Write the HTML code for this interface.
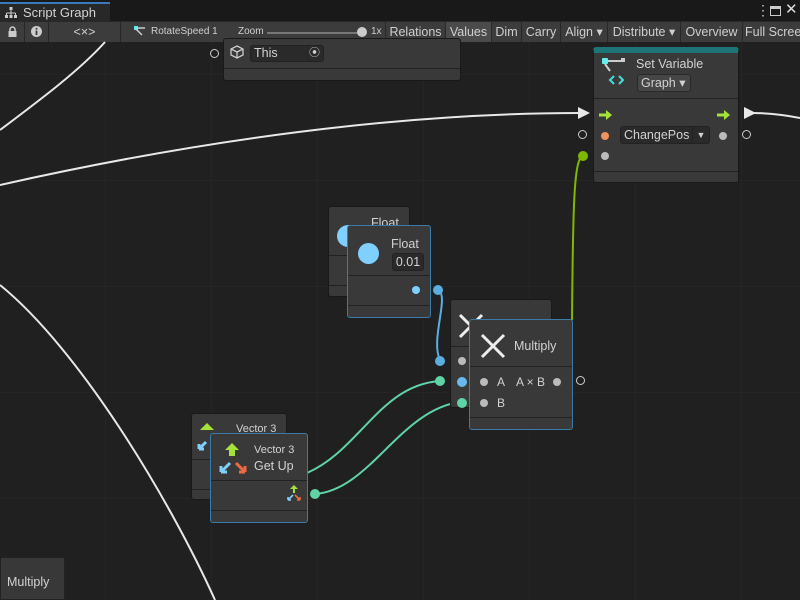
<!DOCTYPE html>
<html><head><meta charset="utf-8"><style>
*{margin:0;padding:0;box-sizing:border-box}
html,body{width:800px;height:600px;overflow:hidden}
body{background:#202020;font-family:"Liberation Sans",sans-serif;color:#d2d2d2;position:relative}
.grid{position:absolute;left:0;top:42px;width:800px;height:558px;background-image:linear-gradient(#252525 1px,transparent 1px),linear-gradient(90deg,#252525 1px,transparent 1px);background-size:106px 106px;background-position:-1px 32px}
.abs{position:absolute}
.node{position:absolute;background:#393939;border:1px solid #191919;border-radius:3px}
.sel{border:1px solid #3a7ca5}
.sep{position:absolute;left:0;right:0;height:1px;background:#222}
.port{position:absolute;width:8px;height:8px;border-radius:50%}
.oport{position:absolute;width:9px;height:9px;border-radius:50%;border:1px solid #ccc}
.tb{position:absolute;top:22px;height:20px;background:#3c3c3c;font-size:12.5px;line-height:20px;color:#cfcfcf;text-align:center}
</style></head><body>
<div class="grid"></div>
<div class="abs" style="left:0;top:0;width:800px;height:21px;background:#191919"></div>
<div class="abs" style="left:0;top:2px;width:110px;height:20px;background:#282828;border-top:2px solid #3a79bb;font-size:13px;line-height:18px;padding-left:23px">Script Graph</div>
<svg class="abs" style="left:5px;top:7px" width="12" height="11"><rect x="4.5" y="0" width="3" height="3" fill="#ccc"/><path d="M6 3v3M1.5 6h9M1.5 6v2M6 6v2M10.5 6v2" stroke="#ccc" fill="none"/><rect x="0" y="8" width="3" height="3" fill="#ccc"/><rect x="4.5" y="8" width="3" height="3" fill="#ccc"/><rect x="9" y="8" width="3" height="3" fill="#ccc"/></svg>
<div class="abs" style="left:756px;top:2px;font-size:14px;color:#ccc">⋮</div>
<div class="abs" style="left:770px;top:6px;width:11px;height:10px;border:1.5px solid #ccc;border-top-width:3px"></div>
<div class="abs" style="left:785px;top:0px;font-size:15px;color:#ddd">✕</div>
<div class="abs" style="left:0;top:21px;width:800px;height:21px;background:#282828"></div>
<div class="tb" style="left:0;width:24px"></div>
<svg class="abs" style="left:8px;top:26px" width="9" height="11"><path d="M2 5V3.5a2.5 2.5 0 0 1 5 0V5" stroke="#ccc" stroke-width="1.5" fill="none"/><rect x="0.5" y="5" width="8" height="6" fill="#ccc"/></svg>
<div class="tb" style="left:25px;width:23px"></div>
<svg class="abs" style="left:31px;top:26px" width="11" height="11"><circle cx="5.5" cy="5.5" r="5.5" fill="#ccc"/><rect x="4.6" y="4.5" width="1.8" height="4.5" fill="#3c3c3c"/><circle cx="5.5" cy="2.8" r="1" fill="#3c3c3c"/></svg>
<div class="tb" style="left:49px;width:71px">&lt;×&gt;</div>
<div class="tb" style="left:121px;width:264px;text-align:left;font-size:10px;padding-left:30px">RotateSpeed 1<span style="position:absolute;left:117px">Zoom</span><span style="position:absolute;left:146px;top:10px;width:95px;height:2px;background:#777"></span><span style="position:absolute;left:236px;top:5px;width:10px;height:10px;border-radius:50%;background:#ccc"></span><span style="position:absolute;left:250px">1x</span></div>
<svg class="abs" style="left:134px;top:26px" width="12" height="11"><rect x="0" y="0" width="4" height="4" fill="#5ee"/><path d="M3 2h8M2 3l6 6" stroke="#ccc" stroke-width="1.5"/></svg>
<div class="tb" style="left:386px;width:59px">Relations</div>
<div class="tb" style="left:446px;width:45px;background:#4b4b4b">Values</div>
<div class="tb" style="left:492px;width:29px">Dim</div>
<div class="tb" style="left:522px;width:38px">Carry</div>
<div class="tb" style="left:561px;width:46px">Align ▾</div>
<div class="tb" style="left:608px;width:72px">Distribute ▾</div>
<div class="tb" style="left:681px;width:61px">Overview</div>
<div class="tb" style="left:743px;width:57px;text-align:left;padding-left:2px;overflow:hidden;white-space:nowrap">Full Screen</div>
<svg class="abs" style="left:0;top:0" width="800" height="600">
<g fill="none" stroke="#e8e8e8" stroke-width="2">
<path d="M0 130 C40 100 80 70 105 42"/>
<path d="M0 185 C200 140 400 113 580 113"/>
<path d="M0 285 C80 350 170 500 215 600"/>
<path d="M752 113 C770 113 785 115 800 118"/>
</g>
<polygon points="578,107 590,113 578,119" fill="#e8e8e8"/>
<polygon points="744,107 756,113 744,119" fill="#e8e8e8"/>
<path d="M583 155 C574 160 573 200 572 320" stroke="#7fb800" stroke-width="2" fill="none"/>
<circle cx="583" cy="156" r="5" fill="#7fb800"/>
<path d="M438 290 C450 295 430 340 440 360" stroke="#5aaee0" stroke-width="2" fill="none"/>
<circle cx="438" cy="290" r="5" fill="#5aaee0"/>
<circle cx="440" cy="361" r="5" fill="#5aaee0"/>
<g stroke="#5fd3a6" stroke-width="2" fill="none">
<path d="M307 473 C360 450 380 385 440 381"/>
<path d="M315 494 C370 490 400 410 460 402"/>
</g>
<circle cx="440" cy="381" r="5" fill="#5fd3a6"/>
<circle cx="315" cy="494" r="5" fill="#5fd3a6"/>
</svg>
<div class="oport" style="left:210px;top:49px"></div>
<div class="node" style="left:223px;top:38px;width:238px;height:43px">
<div class="sep" style="top:29px"></div>
<svg class="abs" style="left:6px;top:6px" width="14" height="14"><path d="M7 1l6 3v6l-6 3-6-3V4zM1 4l6 3 6-3M7 7v6" stroke="#ccc" fill="none" stroke-width="1.3"/></svg>
<div class="abs" style="left:26px;top:6px;width:74px;height:17px;background:#2a2a2a;border:1px solid #222;border-radius:3px;font-size:12.5px;line-height:15px;padding-left:3px">This<span style="position:absolute;right:3px;top:0;font-size:11px">⦿</span></div>
</div>
<div class="node" style="left:593px;top:47px;width:146px;height:136px;border-top:6px solid #1d7577">
<div class="sep" style="top:45px"></div>
<div class="sep" style="top:118px"></div>
<svg class="abs" style="left:6px;top:4px" width="30" height="30"><rect x="2" y="1" width="6" height="6" rx="1" fill="#6ee"/><rect x="21" y="1" width="4" height="4" fill="#ccc"/><path d="M8 4h13M5 7l5 7" stroke="#ccc" stroke-width="2"/><path d="M14 19l-4 4 4 4M19 19l4 4-4 4" stroke="#4dd" stroke-width="2" fill="none"/></svg>
<div class="abs" style="left:42px;top:4px;font-size:12.5px">Set Variable</div>
<div class="abs" style="left:43px;top:21px;width:54px;height:18px;background:#464646;border:1px solid #2a2a2a;border-radius:3px;font-size:12.5px;line-height:16px;padding-left:3px">Graph ▾</div>
<svg class="abs" style="left:5px;top:57px" width="14" height="10"><path d="M0 5h9" stroke="#a6e23c" stroke-width="3"/><path d="M7 0l6 5-6 5z" fill="#a6e23c"/></svg>
<svg class="abs" style="left:123px;top:57px" width="14" height="10"><path d="M0 5h9" stroke="#a6e23c" stroke-width="3"/><path d="M7 0l6 5-6 5z" fill="#a6e23c"/></svg>
<div class="port" style="left:7px;top:79px;background:#f0935a"></div>
<div class="port" style="left:7px;top:99px;background:#bbb"></div>
<div class="port" style="left:125px;top:79px;background:#bbb"></div>
<div class="abs" style="left:26px;top:73px;width:90px;height:18px;background:#2a2a2a;border:1px solid #222;border-radius:3px;font-size:12.5px;line-height:16px;padding-left:3px">ChangePos<span style="position:absolute;right:0;top:0;width:17px;height:16px;border-left:1px solid #222;text-align:center;font-size:9px">▼</span></div>
</div>
<div class="oport" style="left:578px;top:130px"></div>
<div class="oport" style="left:742px;top:130px"></div>
<div class="node" style="left:328px;top:206px;width:82px;height:91px">
<div class="abs" style="left:8px;top:18px;width:22px;height:22px;border-radius:50%;background:#7fcfff"></div>
<div class="abs" style="left:42px;top:9px;font-size:12.5px">Float</div>
<div class="sep" style="top:48px"></div><div class="sep" style="top:78px"></div>
</div>
<div class="node sel" style="left:347px;top:225px;width:84px;height:93px">
<div class="abs" style="left:10px;top:17px;width:21px;height:21px;border-radius:50%;background:#7fcfff"></div>
<div class="abs" style="left:43px;top:11px;font-size:12.5px">Float</div>
<div class="abs" style="left:44px;top:27px;width:32px;height:18px;background:#2a2a2a;border:1px solid #222;border-radius:3px;font-size:12.5px;line-height:16px;text-align:center">0.01</div>
<div class="sep" style="top:49px"></div><div class="sep" style="top:79px"></div>
<div class="port" style="left:64px;top:60px;background:#7fcfff"></div>
</div>
<div class="node" style="left:450px;top:299px;width:102px;height:109px">
<svg class="abs" style="left:7px;top:13px" width="26" height="26"><path d="M2 2l22 22M24 2L2 24" stroke="#eee" stroke-width="3"/></svg>
<div class="sep" style="top:46px"></div>
<div class="port" style="left:7px;top:57px;background:#bbb"></div>
<div class="port" style="left:6px;top:77px;width:10px;height:10px;background:#6ab8f0"></div>
<div class="port" style="left:6px;top:98px;width:10px;height:10px;background:#5fd3a6"></div>
</div>
<div class="node sel" style="left:469px;top:319px;width:104px;height:111px">
<svg class="abs" style="left:10px;top:13px" width="26" height="26"><path d="M2 2l22 22M24 2L2 24" stroke="#eee" stroke-width="3"/></svg>
<div class="abs" style="left:44px;top:19px;font-size:12.5px">Multiply</div>
<div class="sep" style="top:46px"></div><div class="sep" style="top:97px"></div>
<div class="port" style="left:10px;top:58px;background:#bbb"></div>
<div class="port" style="left:10px;top:79px;background:#bbb"></div>
<div class="port" style="left:83px;top:58px;background:#bbb"></div>
<div class="abs" style="left:27px;top:55px;font-size:12px">A</div>
<div class="abs" style="left:46px;top:55px;font-size:12px">A × B</div>
<div class="abs" style="left:27px;top:76px;font-size:12px">B</div>
</div>
<div class="oport" style="left:576px;top:376px"></div>
<div class="node" style="left:191px;top:413px;width:96px;height:87px">
<div class="abs" style="left:44px;top:9px;font-size:11px">Vector 3</div>
<svg class="abs" style="left:5px;top:8px" width="20" height="36"><path d="M10 1l7 7H3z" fill="#a6e23c"/><path d="M9 20l-7 7M2 27v-5M2 27h5" stroke="#7fcfff" stroke-width="3" fill="none"/></svg>
<div class="sep" style="top:45px"></div><div class="sep" style="top:75px"></div>
</div>
<div class="node sel" style="left:210px;top:433px;width:98px;height:90px">
<svg class="abs" style="left:6px;top:8px" width="34" height="34"><path d="M15 1l7 7h-4v6h-6V8H8z" fill="#a6e23c"/><path d="M13 21l-9 9M4 30v-6M4 30h6" stroke="#7fcfff" stroke-width="3" fill="none"/><path d="M19 21l9 9M28 30v-6M28 30h-6" stroke="#f06a40" stroke-width="3" fill="none"/></svg>
<div class="abs" style="left:43px;top:10px;font-size:11px">Vector 3</div>
<div class="abs" style="left:43px;top:25px;font-size:12.5px">Get Up</div>
<div class="sep" style="top:46px"></div><div class="sep" style="top:76px"></div>
<svg class="abs" style="left:75px;top:51px" width="16" height="16"><path d="M8 0l4 4H4z" fill="#a6e23c"/><path d="M8 4v4" stroke="#a6e23c" stroke-width="2"/><path d="M7 10l-5 5M2 15v-3M2 15h3" stroke="#7fcfff" stroke-width="1.6" fill="none"/><path d="M9 10l5 5M14 15v-3M14 15h-3" stroke="#f06a40" stroke-width="1.6" fill="none"/></svg>
</div>
<div class="abs" style="left:0;top:557px;width:65px;height:43px;background:#383838;border:1px solid #222;font-size:12.5px;line-height:48px;padding-left:6px">Multiply</div>
</body></html>
